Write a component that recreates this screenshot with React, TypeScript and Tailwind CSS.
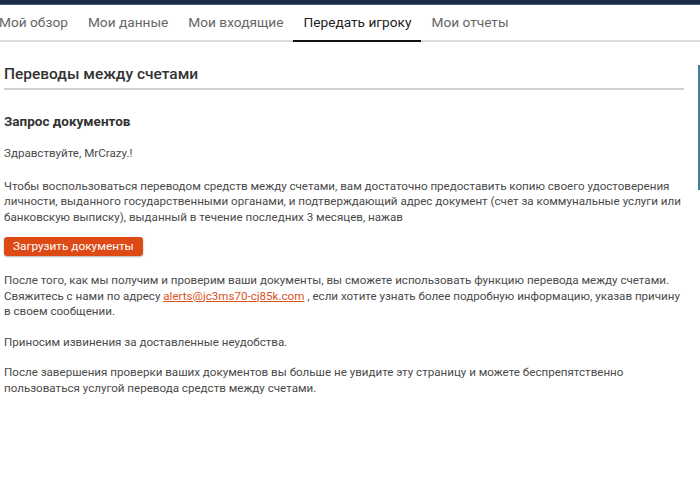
import React from "react";

const tabs = ["Мой обзор", "Мои данные", "Мои входящие", "Передать игроку", "Мои отчеты"];

export default function App() {
  return (
    <div className="w-[700px] h-[487px] bg-white overflow-hidden relative text-[#4a4a4a] font-['Roboto',sans-serif]">
      <div className="h-[5px] bg-[#1c2a44] border-b border-[#4a5a78]" />
      <nav className="flex h-[37px] border-b-2 border-[#dcdcdc]">
        {tabs.map((t, i) => (
          <div
            key={t}
            className={
              "flex items-center text-[13.7px] whitespace-nowrap " +
              (i === 0 ? "pl-0 pr-[10px] -ml-[1px] " : "px-[10px] ") +
              (i === 3 ? "text-[#222] border-b-2 border-[#111] -mb-[2px]" : "text-[#666]")
            }
          >
            {t}
          </div>
        ))}
      </nav>

      <div className="absolute right-0 top-[65px] w-[2px] h-[125px] bg-[#3f7f9a]" />

      <main className="px-[4px] pt-[22px] text-[11.6px] leading-[15.5px]">
        <div className="mr-[12px] border-b-2 border-[#cfcfcf] pb-[4px]">
          <h1 className="text-[15.5px] font-medium text-[#333] leading-[20px]">Переводы между счетами</h1>
        </div>

        <h2 className="mt-[22px] text-[13.5px] font-bold text-[#333] leading-[18px]">Запрос документов</h2>

        <p className="mt-[16px]">Здравствуйте, MrCrazy.!</p>

        <p className="mt-[17px] whitespace-nowrap">
          Чтобы воспользоваться переводом средств между счетами, вам достаточно предоставить копию своего удостоверения
          <br />
          личности, выданного государственными органами, и подтверждающий адрес документ (счет за коммунальные услуги или
          <br />
          банковскую выписку), выданный в течение последних 3 месяцев, нажав
        </p>

        <button className="mt-[12px] h-[19px] px-[9px] rounded-[3px] bg-[#de4a16] text-white text-[11.8px] leading-[19px] shadow-[0_1px_2px_rgba(0,0,0,0.3)]">
          Загрузить документы
        </button>

        <p className="mt-[17px] whitespace-nowrap">
          После того, как мы получим и проверим ваши документы, вы сможете использовать функцию перевода между счетами.
          <br />
          Свяжитесь с нами по адресу{" "}
          <a href="#" className="text-[#d9531e] underline">
            alerts@jc3ms70-cj85k.com
          </a>{" "}
          , если хотите узнать более подробную информацию, указав причину
          <br />
          в своем сообщении.
        </p>

        <p className="mt-[15px]">Приносим извинения за доставленные неудобства.</p>

        <p className="mt-[15px] whitespace-nowrap">
          После завершения проверки ваших документов вы больше не увидите эту страницу и можете беспрепятственно
          <br />
          пользоваться услугой перевода средств между счетами.
        </p>
      </main>
    </div>
  );
}
